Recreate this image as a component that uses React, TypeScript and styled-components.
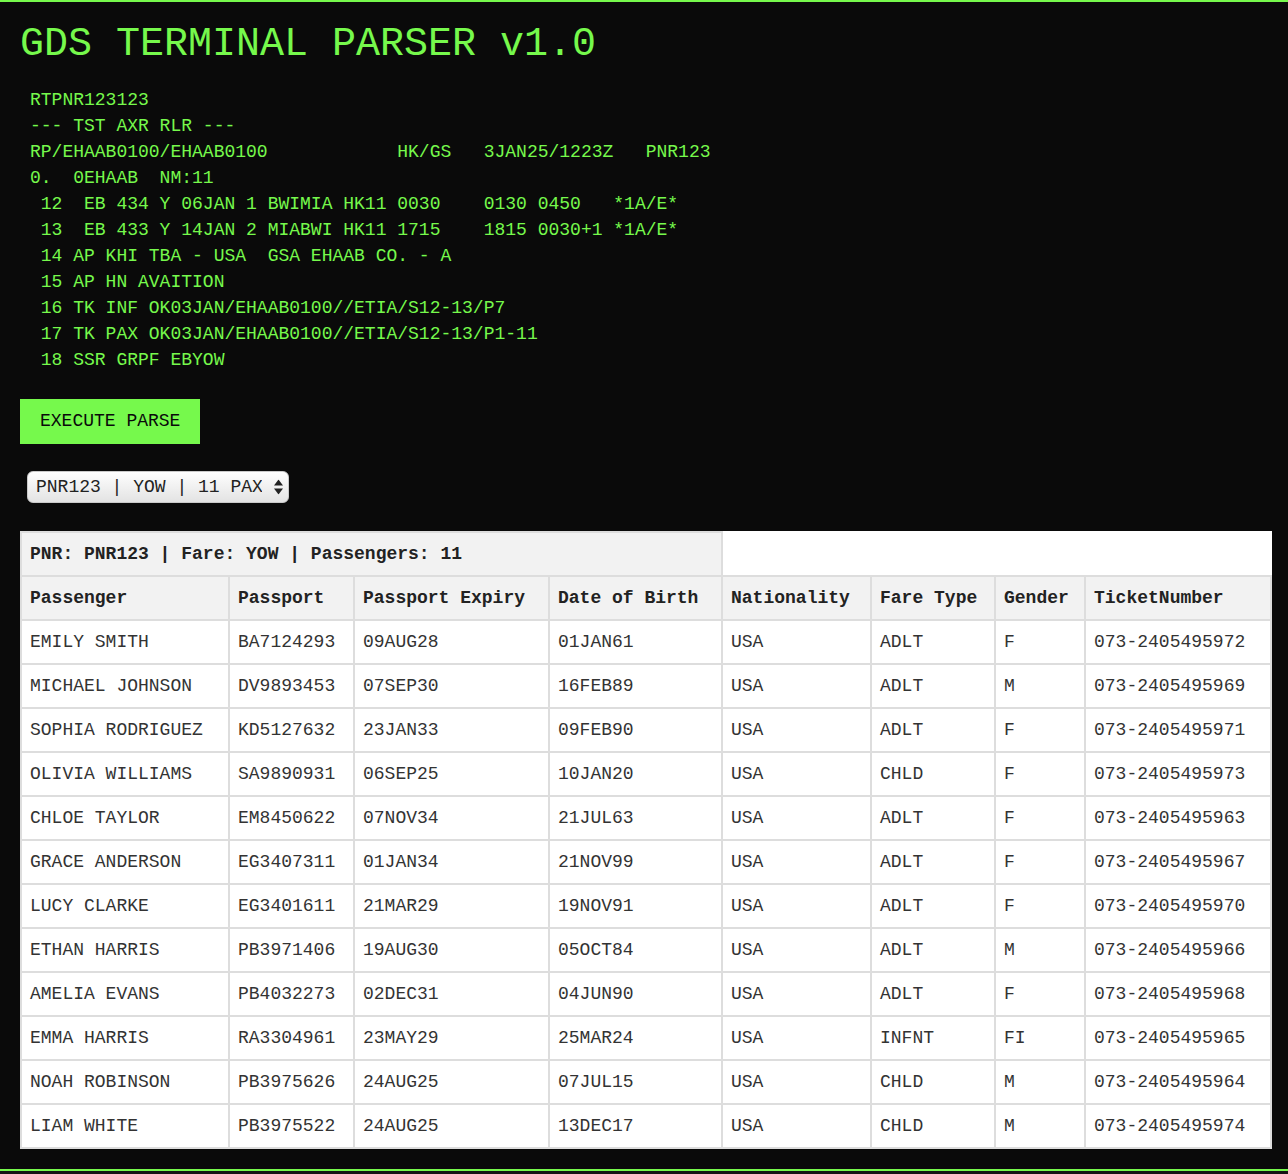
import React, { useState } from 'react';
import styled, { createGlobalStyle } from 'styled-components';

const GREEN = '#76f94c';
const MONO = '"Liberation Mono", "Courier New", Courier, monospace';

const GlobalStyle = createGlobalStyle`
  html, body {
    margin: 0;
    padding: 0;
    background: #141414;
  }
  * {
    box-sizing: border-box;
  }
`;

const Terminal = styled.div`
  background: #0a0a0a;
  border-top: 2px solid ${GREEN};
  border-bottom: 2px solid ${GREEN};
  padding: 20px;
  font-family: ${MONO};
  color: ${GREEN};
`;

const Title = styled.h1`
  margin: 0 0 10px;
  font-size: 40px;
  font-weight: normal;
  line-height: 45px;
`;

const CommandInput = styled.textarea`
  display: block;
  width: 100%;
  height: 306px;
  margin: 0 0 16px;
  padding: 10px;
  border: none;
  outline: none;
  resize: none;
  overflow: hidden;
  background: transparent;
  color: ${GREEN};
  font-family: ${MONO};
  font-size: 18px;
  line-height: 26px;
  white-space: pre;
`;

const ExecuteButton = styled.button`
  display: block;
  padding: 12px 20px;
  border: none;
  background: ${GREEN};
  color: #0a0a0a;
  font-family: ${MONO};
  font-size: 18px;
  line-height: 21px;
  cursor: pointer;
`;

const PickerWrap = styled.div`
  position: relative;
  width: fit-content;
  margin: 27px 0 28px 7px;
`;

const Picker = styled.select`
  display: block;
  appearance: none;
  height: 32px;
  width: 262px;
  padding: 0 26px 0 8px;
  border: 1px solid #c9c9c9;
  border-radius: 6px;
  background: linear-gradient(#fefefe, #e3e3e3);
  color: #222;
  font-family: ${MONO};
  font-size: 18px;
  outline: none;
`;

const Arrows = styled.svg`
  position: absolute;
  right: 6px;
  top: 50%;
  transform: translateY(-50%);
  pointer-events: none;
`;

const Results = styled.table`
  width: 100%;
  border-collapse: collapse;
  table-layout: fixed;
  background: #fff;
  font-family: ${MONO};
  font-size: 18px;
`;

const Column = styled.col<{ $w: number }>`
  width: ${(p) => p.$w}px;
`;

const HeadCell = styled.th`
  border: 2px solid #ddd;
  padding: 11px 8px;
  line-height: 20px;
  background: #f2f2f2;
  color: #222;
  font-weight: bold;
  text-align: left;
  white-space: nowrap;
`;

const Cell = styled.td`
  border: 2px solid #ddd;
  padding: 11px 8px;
  line-height: 20px;
  color: #333;
  text-align: left;
  white-space: nowrap;
`;

const RAW = `RTPNR123123
--- TST AXR RLR ---
RP/EHAAB0100/EHAAB0100            HK/GS   3JAN25/1223Z   PNR123
0.  0EHAAB  NM:11
 12  EB 434 Y 06JAN 1 BWIMIA HK11 0030    0130 0450   *1A/E*
 13  EB 433 Y 14JAN 2 MIABWI HK11 1715    1815 0030+1 *1A/E*
 14 AP KHI TBA - USA  GSA EHAAB CO. - A
 15 AP HN AVAITION
 16 TK INF OK03JAN/EHAAB0100//ETIA/S12-13/P7
 17 TK PAX OK03JAN/EHAAB0100//ETIA/S12-13/P1-11
 18 SSR GRPF EBYOW`;

const columns = [
  { label: 'Passenger', width: 208 },
  { label: 'Passport', width: 125 },
  { label: 'Passport Expiry', width: 195 },
  { label: 'Date of Birth', width: 173 },
  { label: 'Nationality', width: 149 },
  { label: 'Fare Type', width: 124 },
  { label: 'Gender', width: 90 },
  { label: 'TicketNumber', width: 186 },
];

const passengers = [
  ['EMILY SMITH', 'BA7124293', '09AUG28', '01JAN61', 'USA', 'ADLT', 'F', '073-2405495972'],
  ['MICHAEL JOHNSON', 'DV9893453', '07SEP30', '16FEB89', 'USA', 'ADLT', 'M', '073-2405495969'],
  ['SOPHIA RODRIGUEZ', 'KD5127632', '23JAN33', '09FEB90', 'USA', 'ADLT', 'F', '073-2405495971'],
  ['OLIVIA WILLIAMS', 'SA9890931', '06SEP25', '10JAN20', 'USA', 'CHLD', 'F', '073-2405495973'],
  ['CHLOE TAYLOR', 'EM8450622', '07NOV34', '21JUL63', 'USA', 'ADLT', 'F', '073-2405495963'],
  ['GRACE ANDERSON', 'EG3407311', '01JAN34', '21NOV99', 'USA', 'ADLT', 'F', '073-2405495967'],
  ['LUCY CLARKE', 'EG3401611', '21MAR29', '19NOV91', 'USA', 'ADLT', 'F', '073-2405495970'],
  ['ETHAN HARRIS', 'PB3971406', '19AUG30', '05OCT84', 'USA', 'ADLT', 'M', '073-2405495966'],
  ['AMELIA EVANS', 'PB4032273', '02DEC31', '04JUN90', 'USA', 'ADLT', 'F', '073-2405495968'],
  ['EMMA HARRIS', 'RA3304961', '23MAY29', '25MAR24', 'USA', 'INFNT', 'FI', '073-2405495965'],
  ['NOAH ROBINSON', 'PB3975626', '24AUG25', '07JUL15', 'USA', 'CHLD', 'M', '073-2405495964'],
  ['LIAM WHITE', 'PB3975522', '24AUG25', '13DEC17', 'USA', 'CHLD', 'M', '073-2405495974'],
];

const App: React.FC = () => {
  const [raw, setRaw] = useState(RAW);

  return (
    <>
      <GlobalStyle />
      <Terminal>
        <Title>GDS TERMINAL PARSER v1.0</Title>
        <CommandInput
          value={raw}
          spellCheck={false}
          onChange={(e) => setRaw(e.target.value)}
        />
        <ExecuteButton>EXECUTE PARSE</ExecuteButton>

        <PickerWrap>
          <Picker defaultValue="PNR123">
            <option value="PNR123">PNR123 | YOW | 11 PAX</option>
          </Picker>
          <Arrows width="9" height="15" viewBox="0 0 9 15">
            <path d="M4.5 0 L9 6 L0 6 Z" fill="#222" />
            <path d="M0 9 L9 9 L4.5 15 Z" fill="#222" />
          </Arrows>
        </PickerWrap>

        <Results>
          <colgroup>
            {columns.map((c) => (
              <Column key={c.label} $w={c.width} />
            ))}
          </colgroup>
          <thead>
            <tr>
              <HeadCell colSpan={4}>PNR: PNR123 | Fare: YOW | Passengers: 11</HeadCell>
            </tr>
            <tr>
              {columns.map((c) => (
                <HeadCell key={c.label}>{c.label}</HeadCell>
              ))}
            </tr>
          </thead>
          <tbody>
            {passengers.map((row) => (
              <tr key={row[7]}>
                {row.map((value, i) => (
                  <Cell key={i}>{value}</Cell>
                ))}
              </tr>
            ))}
          </tbody>
        </Results>
      </Terminal>
    </>
  );
};

export default App;
